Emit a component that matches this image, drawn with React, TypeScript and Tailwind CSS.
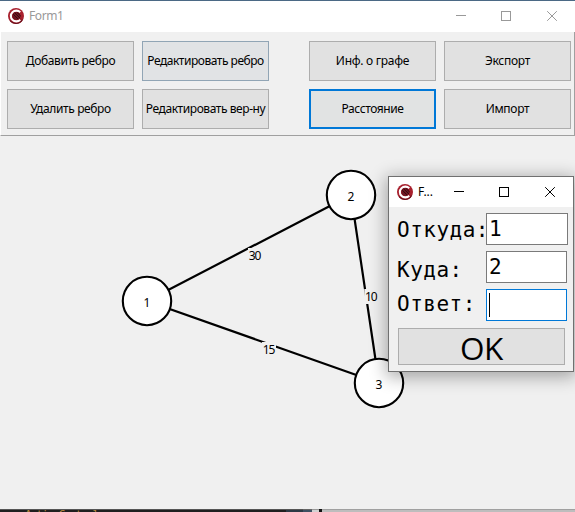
import React from "react";

const UI = "font-['Noto_Sans','Open_Sans',sans-serif]";

function Logo() {
  return (
    <svg width="16" height="16" viewBox="0 0 16 16" className="block shrink-0">
      <circle cx="8" cy="8" r="8" fill="#a8202e" />
      <path d="M2 12.5A7.5 7.5 0 0 0 14.5 11.5" fill="none" stroke="#6b121d" strokeWidth="1.2" />
      <path d="M12.2 4.3A5.4 5.4 0 1 0 12.2 11.7" fill="none" stroke="#fff" strokeWidth="2.1" />
      <circle cx="8.3" cy="8" r="4" fill="#6e1420" />
      <path d="M5.2 6.2 10 11M6.8 4.8 12.2 10.2M9.2 4.6 13 8.4" stroke="#350c12" strokeWidth="1" />
    </svg>
  );
}

function Caption({ color }: { color: string }) {
  return (
    <svg width="102" height="10" viewBox="0 0 102 10" className="block shrink-0" fill="none" stroke={color}>
      <path d="M0 4.5H10" shapeRendering="crispEdges" />
      <rect x="45.5" y="0.5" width="9" height="9" shapeRendering="crispEdges" />
      <path d="M91.2 0.2 100.8 9.8M100.8 0.2 91.2 9.8" />
    </svg>
  );
}

function ToolButton({ label, spacing, tone }: { label: string; spacing: string; tone?: string }) {
  return (
    <button
      className={`flex h-10 w-[127px] shrink-0 items-center justify-center whitespace-nowrap text-[12px] leading-4 text-black ${spacing} ${
        tone ?? "border border-[#adadad] bg-[#e1e1e1]"
      }`}
    >
      {label}
    </button>
  );
}

function Node({ x, y, n }: { x: number; y: number; n: string }) {
  return (
    <g>
      <circle cx={x} cy={y} r="24.2" fill="#fff" stroke="#000" strokeWidth="2.1" />
      <text x={x} y={y + 6} textAnchor="middle">{n}</text>
    </g>
  );
}

function Weight({ x, y, n }: { x: number; y: number; n: string }) {
  return (
    <g>
      <rect x={x - 7} y={y - 12} width="14" height="15" fill="#f0f0f0" />
      <text x={x} y={y} textAnchor="middle" textLength="12.5">{n}</text>
    </g>
  );
}

function Graph() {
  return (
    <svg width="574" height="373" viewBox="0 136 574 373" className={`block ${UI} text-[12px]`}>
      <path d="M147 301 351 195M351 195 379 383M147 301 379 383" stroke="#000" strokeWidth="2.2" />
      <Weight x={255} y={260} n="30" />
      <Weight x={371.3} y={301} n="10" />
      <Weight x={269} y={354} n="15" />
      <Node x={147} y={301} n="1" />
      <Node x={351} y={195} n="2" />
      <Node x={379} y={383} n="3" />
    </svg>
  );
}

function Field({ label, value, row, text, box }: { label: string; value?: string; row: string; text: string; box: string }) {
  return (
    <div className={`flex h-8 ${row}`}>
      <span className={`w-[89px] shrink-0 whitespace-nowrap leading-7 ${text}`}>{label}</span>
      <div className={`flex h-8 items-center border bg-white pl-[2px] leading-7 ${box}`}>
        {value ? <span className="-mt-px">{value}</span> : <span className="h-6 w-px bg-black" />}
      </div>
    </div>
  );
}

function Dialog() {
  return (
    <div className="absolute left-[388px] top-[176px] h-[196px] w-[186px] border border-[#707070] bg-[#f0f0f0] shadow-[0_3px_16px_2px_rgba(0,0,0,0.32)]">
      <div className="flex h-[30px] items-center bg-white pl-2 text-[12px]">
        <Logo />
        <span className="ml-[5px] w-[36px] tracking-[-0.1px]">F...</span>
        <Caption color="#000" />
      </div>
      <div className="pl-2 pt-[6px] font-['DejaVu_Sans_Mono',monospace] text-[21px] tracking-[0.5px]">
        <Field label="Откуда:" value="1" row="" text="pt-[3px]" box="w-[82px] border-[#7a7a7a]" />
        <Field label="Куда:" value="2" row="mt-[6px]" text="pt-[5px]" box="w-[81px] border-[#7a7a7a]" />
        <Field label="Ответ:" row="mt-[6px]" text="pt-px" box="w-[81px] border-[#0078d7]" />
      </div>
      <button className="ml-[9px] mt-[7px] flex h-[37px] w-[167px] items-center justify-center border border-[#adadad] bg-[#e1e1e1] pt-[3px] font-['Open_Sans','Noto_Sans',sans-serif] text-[31.5px] leading-8 tracking-[-0.5px]">
        OK
      </button>
    </div>
  );
}

export default function App() {
  return (
    <div className={`relative h-[512px] w-[575px] overflow-hidden bg-[#f0f0f0] text-black ${UI}`}>
      <header className="flex h-8 items-center border-t border-[#4b6985] bg-white pb-px pl-2 text-[12px] text-[#999]">
        <Logo />
        <span className="ml-[5px] w-[427px] tracking-[-0.4px]">Form1</span>
        <Caption color="#999" />
      </header>
      <section className="flex h-[104px] gap-2 border-b border-l border-r border-b-[#a0a0a0] border-l-white border-r-[#a0a0a0] pl-[6px] pt-[9px]">
        <div className="flex flex-col gap-2">
          <ToolButton label="Добавить ребро" spacing="tracking-[-0.37px]" />
          <ToolButton label="Удалить ребро" spacing="tracking-[-0.37px]" />
        </div>
        <div className="mr-8 flex flex-col gap-2">
          <ToolButton label="Редактировать ребро" spacing="tracking-[-0.47px]" tone="border border-[#91a5b5] bg-[#e1e3e5]" />
          <ToolButton label="Редактировать вер-ну" spacing="tracking-[-0.43px]" />
        </div>
        <div className="flex flex-col gap-2">
          <ToolButton label="Инф. о графе" spacing="tracking-[-0.27px]" />
          <ToolButton label="Расстояние" spacing="tracking-[-0.4px]" tone="border-2 border-[#0078d7] bg-[#e1e3e3]" />
        </div>
        <div className="flex flex-col gap-2">
          <ToolButton label="Экспорт" spacing="tracking-[-0.3px]" />
          <ToolButton label="Импорт" spacing="tracking-[-0.3px]" />
        </div>
      </section>
      <Graph />
      <footer className="flex h-[3px] overflow-hidden">
        <div className="h-[3px] w-[286px] overflow-hidden border-t border-[#555] bg-[#1f1f1f] pl-[25px] font-['DejaVu_Sans_Mono',monospace] text-[11px] leading-[9px] tracking-[-1px] text-[#b88a3d]">
          ActiveControl
        </div>
        <div className="h-[3px] w-[17px] border-t border-[#555] bg-[#2c3945]" />
        <div className="h-[3px] w-[9px] border-t border-[#666] bg-[#3d5062]" />
        <div className="h-[3px] w-[7px] border-t border-[#999] bg-[#d2d2d2]" />
        <div className="h-[3px] w-[3px] bg-[#111]" />
        <div className="h-[3px] grow border-t border-[#a0a0a0] bg-[#bdbdbd]" />
      </footer>
      <Dialog />
    </div>
  );
}
